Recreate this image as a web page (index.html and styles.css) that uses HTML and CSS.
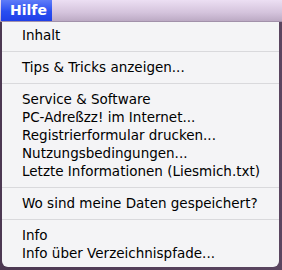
FILE: index.html
```html
<!DOCTYPE html>
<html lang="de">

<head>
    <meta charset="UTF-8">
    <title>Hilfe</title>
    <link rel="stylesheet" href="styles.css">
</head>

<body>
    <div class="menubar">
        <span class="menu-title">Hilfe</span>
    </div>
    <div class="desk">
        <ul class="menu">
            <li class="item">Inhalt</li>
            <li class="sep"></li>
            <li class="item">Tips &amp; Tricks anzeigen...</li>
            <li class="sep"></li>
            <li class="item">Service &amp; Software</li>
            <li class="item">PC-Adreßzz! im Internet...</li>
            <li class="item">Registrierformular drucken...</li>
            <li class="item">Nutzungsbedingungen...</li>
            <li class="item">Letzte Informationen (Liesmich.txt)</li>
            <li class="sep"></li>
            <li class="item">Wo sind meine Daten gespeichert?</li>
            <li class="sep"></li>
            <li class="item">Info</li>
            <li class="item">Info über Verzeichnispfade...</li>
        </ul>
    </div>
</body>

</html>
```

FILE: styles.css
```css
* {
    margin: 0;
    padding: 0;
    box-sizing: border-box;
}

body {
    width: 282px;
    height: 270px;
    overflow: hidden;
    font-family: 'DejaVu Sans', sans-serif;
    font-size: 13.5px;
    color: #000;
    background: #4a3850;
}

.menubar {
    height: 22px;
    display: flex;
    background: linear-gradient(to bottom, #ecdff3, #d4c3dc 60%, #bcaac4);
    border-bottom: 1px solid #a291aa;
}

.menu-title {
    width: 51px;
    height: 21px;
    margin-left: 1px;
    padding-left: 9px;
    line-height: 21px;
    font-size: 14px;
    font-weight: bold;
    color: #fff;
    background: linear-gradient(to bottom, #5f7cf8, #2a4ef0 55%, #1f3fe8);
}

.desk {
    height: 248px;
    background: linear-gradient(to right, #4c3852, #5a4560);
    padding: 0 3px 0 2px;
}

.menu {
    list-style: none;
    height: 245px;
    padding: 4px 0;
    background: #f4f4f6;
    border-radius: 0 0 6px 6px;
}

.item {
    height: 18px;
    line-height: 19px;
    padding-left: 20px;
    white-space: nowrap;
}

.sep {
    height: 14px;
    display: flex;
    align-items: center;
}

.sep::after {
    content: "";
    flex: 1;
    height: 1px;
    background: #d9d9dc;
}
```
